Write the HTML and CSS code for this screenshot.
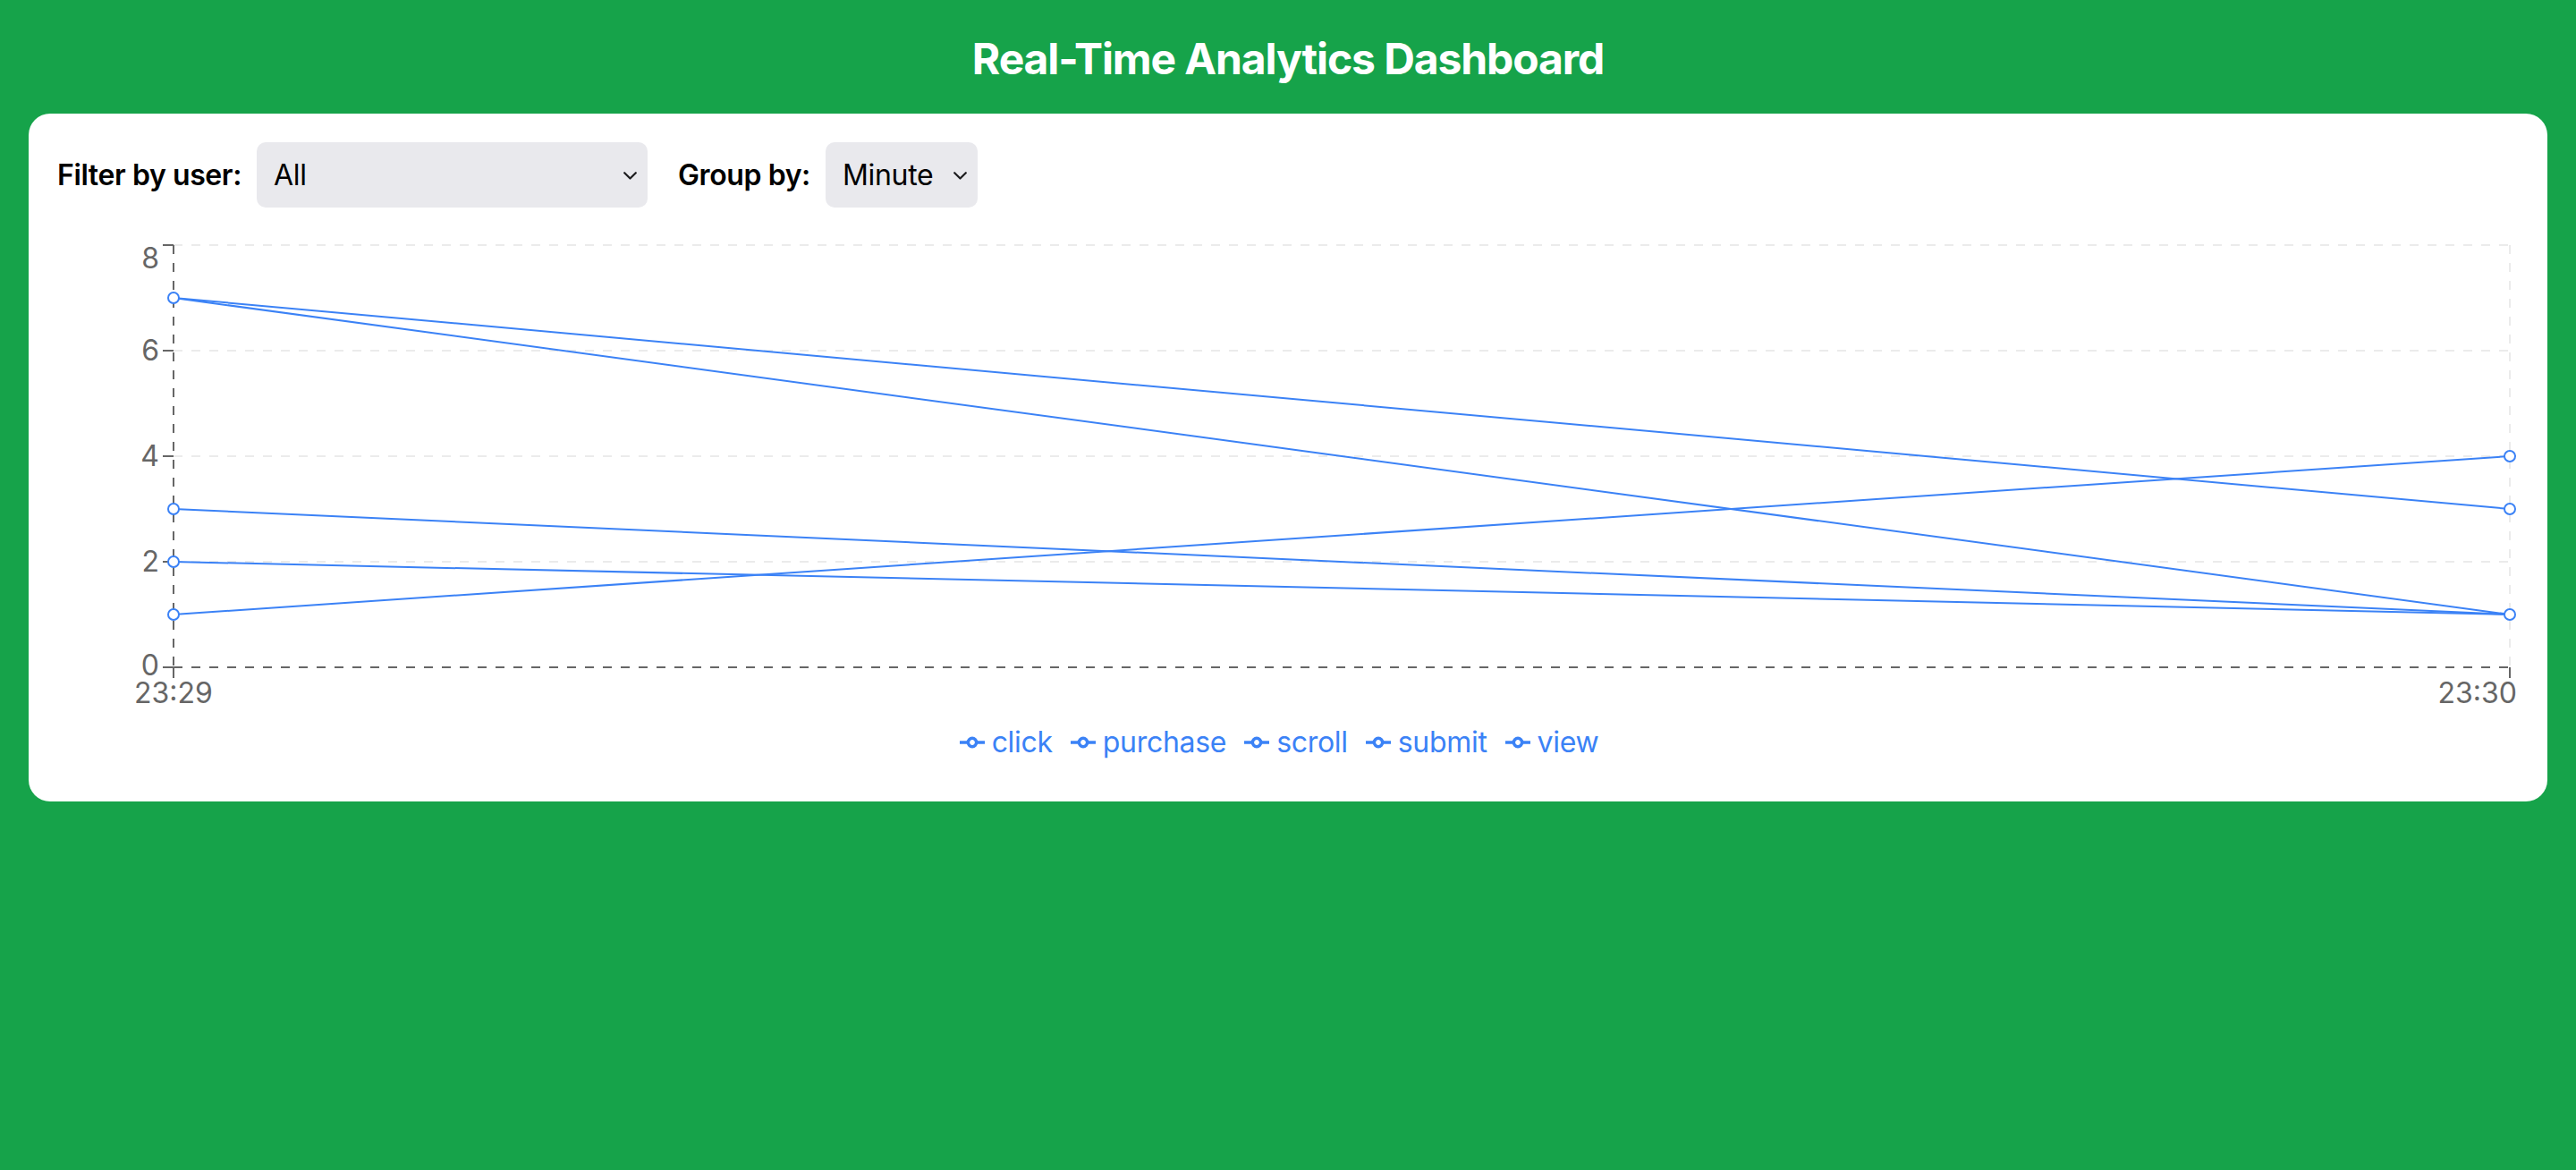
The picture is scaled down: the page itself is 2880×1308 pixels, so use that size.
FILE: index.html
```html
<!DOCTYPE html>
<html lang="en">
<head>
<meta charset="utf-8">
<title>Real-Time Analytics Dashboard</title>
<link rel="stylesheet" href="styles.css">
</head>
<body>
<div class="app">
  <h1 class="title">Real-Time Analytics Dashboard</h1>
  <section class="card">
    <div class="controls">
      <label class="control">
        <span class="control-label">Filter by user:</span>
        <span class="select-wrap select-user">
          <select class="select">
            <option>All</option>
          </select>
          <svg class="chevron" width="15" height="9" viewBox="0 0 15 9"><polyline points="1.2,1.2 7.5,7.5 13.8,1.2" fill="none" stroke="#1d1d1f" stroke-width="2.2" stroke-linecap="round" stroke-linejoin="round"/></svg>
        </span>
      </label>
      <label class="control">
        <span class="control-label">Group by:</span>
        <span class="select-wrap select-group">
          <select class="select">
            <option>Minute</option>
          </select>
          <svg class="chevron" width="15" height="9" viewBox="0 0 15 9"><polyline points="1.2,1.2 7.5,7.5 13.8,1.2" fill="none" stroke="#1d1d1f" stroke-width="2.2" stroke-linecap="round" stroke-linejoin="round"/></svg>
        </span>
      </label>
    </div>

    <div class="chart">
      <svg class="chart-svg" width="2752" height="542" viewBox="0 0 2752 542">
        <g class="grid">
          <line x1="130" y1="482" x2="2742" y2="482"/>
          <line x1="130" y1="364" x2="2742" y2="364"/>
          <line x1="130" y1="246" x2="2742" y2="246"/>
          <line x1="130" y1="128" x2="2742" y2="128"/>
          <line x1="130" y1="10" x2="2742" y2="10"/>
          <line x1="130" y1="10" x2="130" y2="482"/>
          <line x1="2742" y1="10" x2="2742" y2="482"/>
        </g>
        <g class="axis">
          <line class="axis-line" x1="130" y1="10" x2="130" y2="482"/>
          <line class="axis-line" x1="130" y1="482" x2="2742" y2="482"/>
          <line class="tick" x1="118" y1="482" x2="130" y2="482"/>
          <line class="tick" x1="118" y1="364" x2="130" y2="364"/>
          <line class="tick" x1="118" y1="246" x2="130" y2="246"/>
          <line class="tick" x1="118" y1="128" x2="130" y2="128"/>
          <line class="tick" x1="118" y1="10" x2="130" y2="10"/>
          <line class="tick" x1="130" y1="482" x2="130" y2="494"/>
          <line class="tick" x1="2742" y1="482" x2="2742" y2="494"/>
          <text class="tick-label" x="114" y="480" dy="0.355em" text-anchor="end">0</text>
          <text class="tick-label" x="114" y="364" dy="0.355em" text-anchor="end">2</text>
          <text class="tick-label" x="114" y="246" dy="0.355em" text-anchor="end">4</text>
          <text class="tick-label" x="114" y="128" dy="0.355em" text-anchor="end">6</text>
          <text class="tick-label" x="114" y="25" dy="0.355em" text-anchor="end">8</text>
          <text class="tick-label" x="130" y="522" text-anchor="middle">23:29</text>
          <text class="tick-label" x="2750" y="522" text-anchor="end">23:30</text>
        </g>
        <g class="series">
          <line x1="130" y1="69" x2="2742" y2="305"/>
          <line x1="130" y1="69" x2="2742" y2="423"/>
          <line x1="130" y1="305" x2="2742" y2="423"/>
          <line x1="130" y1="364" x2="2742" y2="423"/>
          <line x1="130" y1="423" x2="2742" y2="246"/>
        </g>
        <g class="dots">
          <circle cx="130" cy="69" r="6"/>
          <circle cx="130" cy="305" r="6"/>
          <circle cx="130" cy="364" r="6"/>
          <circle cx="130" cy="423" r="6"/>
          <circle cx="2742" cy="246" r="6"/>
          <circle cx="2742" cy="305" r="6"/>
          <circle cx="2742" cy="423" r="6"/>
        </g>
      </svg>
      <ul class="legend">
        <li class="legend-item"><svg class="legend-icon" width="28" height="28" viewBox="0 0 32 32"><path d="M0,16h10.67A5.33,5.33,0,1,1,21.33,16H32M21.33,16A5.33,5.33,0,1,1,10.67,16"/></svg><span>click</span></li>
        <li class="legend-item"><svg class="legend-icon" width="28" height="28" viewBox="0 0 32 32"><path d="M0,16h10.67A5.33,5.33,0,1,1,21.33,16H32M21.33,16A5.33,5.33,0,1,1,10.67,16"/></svg><span>purchase</span></li>
        <li class="legend-item"><svg class="legend-icon" width="28" height="28" viewBox="0 0 32 32"><path d="M0,16h10.67A5.33,5.33,0,1,1,21.33,16H32M21.33,16A5.33,5.33,0,1,1,10.67,16"/></svg><span>scroll</span></li>
        <li class="legend-item"><svg class="legend-icon" width="28" height="28" viewBox="0 0 32 32"><path d="M0,16h10.67A5.33,5.33,0,1,1,21.33,16H32M21.33,16A5.33,5.33,0,1,1,10.67,16"/></svg><span>submit</span></li>
        <li class="legend-item"><svg class="legend-icon" width="28" height="28" viewBox="0 0 32 32"><path d="M0,16h10.67A5.33,5.33,0,1,1,21.33,16H32M21.33,16A5.33,5.33,0,1,1,10.67,16"/></svg><span>view</span></li>
      </ul>
    </div>
  </section>
</div>
</body>
</html>
```

FILE: styles.css
```css
* {
  box-sizing: border-box;
}

html, body {
  margin: 0;
  padding: 0;
  background: #16a34a;
  font-family: Inter, "Noto Sans", "Liberation Sans", sans-serif;
  min-height: 100%;
}

.app {
  padding: 32px;
}

.title {
  margin: 0 0 27px;
  font-size: 48px;
  line-height: 68px;
  font-weight: 700;
  color: #ffffff;
  text-align: center;
  letter-spacing: -1.1px;
}

.card {
  background: #ffffff;
  border-radius: 24px;
  padding: 32px;
}

.controls {
  display: flex;
  align-items: center;
  gap: 34px;
}

.control {
  display: flex;
  align-items: center;
  gap: 17px;
}

.control-label {
  font-size: 32px;
  font-weight: 600;
  color: #000;
  line-height: 40px;
  letter-spacing: -0.4px;
}

.select-wrap {
  position: relative;
  display: block;
  height: 73px;
}

.select-user {
  width: 437px;
}

.select-group {
  width: 170px;
}

.select {
  appearance: none;
  -webkit-appearance: none;
  width: 100%;
  height: 100%;
  margin: 0;
  border: none;
  border-radius: 10px;
  background: #e9e9ed;
  color: #000;
  font-family: inherit;
  font-size: 32px;
  font-weight: 400;
  letter-spacing: -0.3px;
  padding: 0 40px 0 19px;
  outline: none;
}

.chevron {
  position: absolute;
  right: 12px;
  top: 33px;
  pointer-events: none;
}

.chart {
  margin-top: 32px;
  height: 600px;
  padding-bottom: 10px;
}

.chart-svg {
  display: block;
  overflow: visible;
}

.grid line {
  stroke: #ebebeb;
  stroke-width: 2;
  stroke-dasharray: 10 10;
}

.axis-line {
  stroke: #666666;
  stroke-width: 2;
  stroke-dasharray: 10 10;
}

.tick {
  stroke: #666666;
  stroke-width: 2;
}

.tick-label {
  fill: #666666;
  font-family: Inter, "Noto Sans", "Liberation Sans", sans-serif;
  font-size: 32px;
}

.series line {
  stroke: #3b82f6;
  stroke-width: 2;
}

.dots circle {
  fill: #ffffff;
  stroke: #3b82f6;
  stroke-width: 2;
}

.legend {
  list-style: none;
  margin: 0;
  padding: 0;
  height: 48px;
  display: flex;
  justify-content: center;
  align-items: center;
}

.legend-item {
  display: flex;
  align-items: center;
  margin-right: 20px;
  color: #3b82f6;
  font-size: 32px;
  line-height: 40px;
  letter-spacing: -0.3px;
}

.legend-icon {
  display: block;
  margin-right: 8px;
}

.legend-icon path {
  fill: none;
  stroke: #3b82f6;
  stroke-width: 4;
}
```
